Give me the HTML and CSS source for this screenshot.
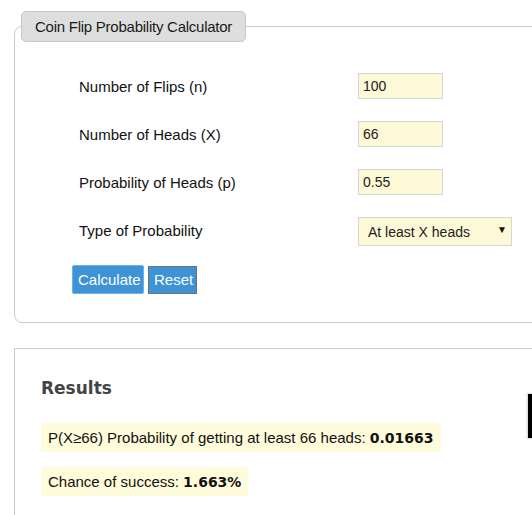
FILE: index.html
```html
<!DOCTYPE html>
<html>
<head>
<meta charset="utf-8">
<link rel="stylesheet" href="styles.css">
</head>
<body>
<div class="page">
  <fieldset class="calc">
    <legend class="calc-title">Coin Flip Probability Calculator</legend>
    <div class="rows">
      <div class="row"><label class="lbl">Number of Flips (n)</label><input class="inp" type="text" value="100"></div>
      <div class="row"><label class="lbl">Number of Heads (X)</label><input class="inp" type="text" value="66"></div>
      <div class="row"><label class="lbl">Probability of Heads (p)</label><input class="inp" type="text" value="0.55"></div>
      <div class="row"><label class="lbl">Type of Probability</label>
        <div class="sel-wrap"><select class="sel"><option>At least X heads</option></select></div>
      </div>
    </div>
    <div class="buttons">
      <button class="btn btn-calc">Calculate</button>
      <button class="btn btn-reset">Reset</button>
    </div>
  </fieldset>
  <div class="results">
    <h2 class="res-title">Results</h2>
    <div class="res-line">P(X≥66) Probability of getting at least 66 heads: <b class="val">0.01663</b></div>
    <div class="res-line">Chance of success: <b class="val">1.663%</b></div>
  </div>
  <div class="edge-box"></div>
</div>
</body>
</html>
```
FILE: styles.css
```css
html, body {
  margin: 0;
  padding: 0;
  background: #fff;
  overflow: hidden;
}
body {
  font-family: "Liberation Sans", Arial, sans-serif;
  color: #111;
}
.page {
  position: relative;
  width: 532px;
  height: 515px;
  overflow: hidden;
}
.calc {
  margin: 11px 0 0 14px;
  width: 700px;
  padding: 0 0 28px 0;
  border: 1px solid #cccccc;
  border-radius: 8px;
  box-sizing: border-box;
}
.calc-title {
  margin-left: 6px;
  padding: 0 13px;
  height: 31px;
  line-height: 29px;
  box-sizing: border-box;
  background: #dedede;
  border: 1px solid #c8c8c8;
  border-radius: 5px;
  font-size: 15px;
  letter-spacing: -0.25px;
  color: #1a1a1a;
}
.rows {
  padding-top: 20px;
}
.row {
  display: flex;
  align-items: center;
  height: 48px;
  padding-left: 64px;
}
.lbl {
  width: 279px;
  font-size: 15px;
  color: #111;
}
.inp {
  width: 85px;
  height: 26px;
  box-sizing: border-box;
  border: 1px solid #d6d6d6;
  background: #fdf8d6;
  padding: 0 4px;
  font-family: "Liberation Sans", Arial, sans-serif;
  font-size: 14px;
  color: #222;
  outline: none;
  margin: 0;
}
.sel-wrap {
  position: relative;
  margin-top: 3px;
}
.sel {
  appearance: none;
  -webkit-appearance: none;
  width: 154px;
  height: 29px;
  box-sizing: border-box;
  border: 1px solid #d6d6d6;
  border-radius: 0;
  background: #fdf8d6;
  padding: 0 0 0 9px;
  font-family: "Liberation Sans", Arial, sans-serif;
  font-size: 14px;
  color: #222;
  margin: 0;
}
.sel-wrap::after {
  content: "▼";
  position: absolute;
  right: 5px;
  top: 7px;
  font-size: 10px;
  color: #111;
  pointer-events: none;
}
.buttons {
  display: flex;
  align-items: center;
  gap: 4px;
  padding-left: 57px;
  margin-top: 11px;
}
.btn {
  margin: 0;
  height: 29px;
  box-sizing: border-box;
  background: #3d93d5;
  color: #fff;
  font-family: "Liberation Sans", Arial, sans-serif;
  font-size: 15px;
  padding: 0 5px;
  cursor: pointer;
}
.btn-calc {
  width: 72px;
  border: 1px solid #6fb0e8;
  border-radius: 2px;
}
.btn-reset {
  width: 49px;
  height: 28px;
  border: 1px solid #707070;
  border-radius: 0;
}
.results {
  margin: 25px 0 0 14px;
  width: 700px;
  height: 300px;
  border: 1px solid #cccccc;
  box-sizing: border-box;
  padding: 28px 0 0 26px;
}
.res-title {
  margin: 0 0 24px 0;
  font-family: "DejaVu Sans", Verdana, sans-serif;
  font-weight: bold;
  font-size: 17px;
  line-height: 22px;
  color: #444;
}
.res-line {
  width: fit-content;
  height: 29px;
  line-height: 29px;
  padding: 0 7px;
  background: #fffcdc;
  font-size: 15px;
  color: #111;
  margin-bottom: 15px;
}
.val {
  font-family: "DejaVu Sans", Verdana, sans-serif;
  font-size: 14px;
  font-weight: bold;
}
.edge-box {
  position: absolute;
  left: 527px;
  top: 393px;
  width: 10px;
  height: 44px;
  background: #000;
  border: 1px solid #ddd;
  box-shadow: -1px 0 2px #eee;
}
```
